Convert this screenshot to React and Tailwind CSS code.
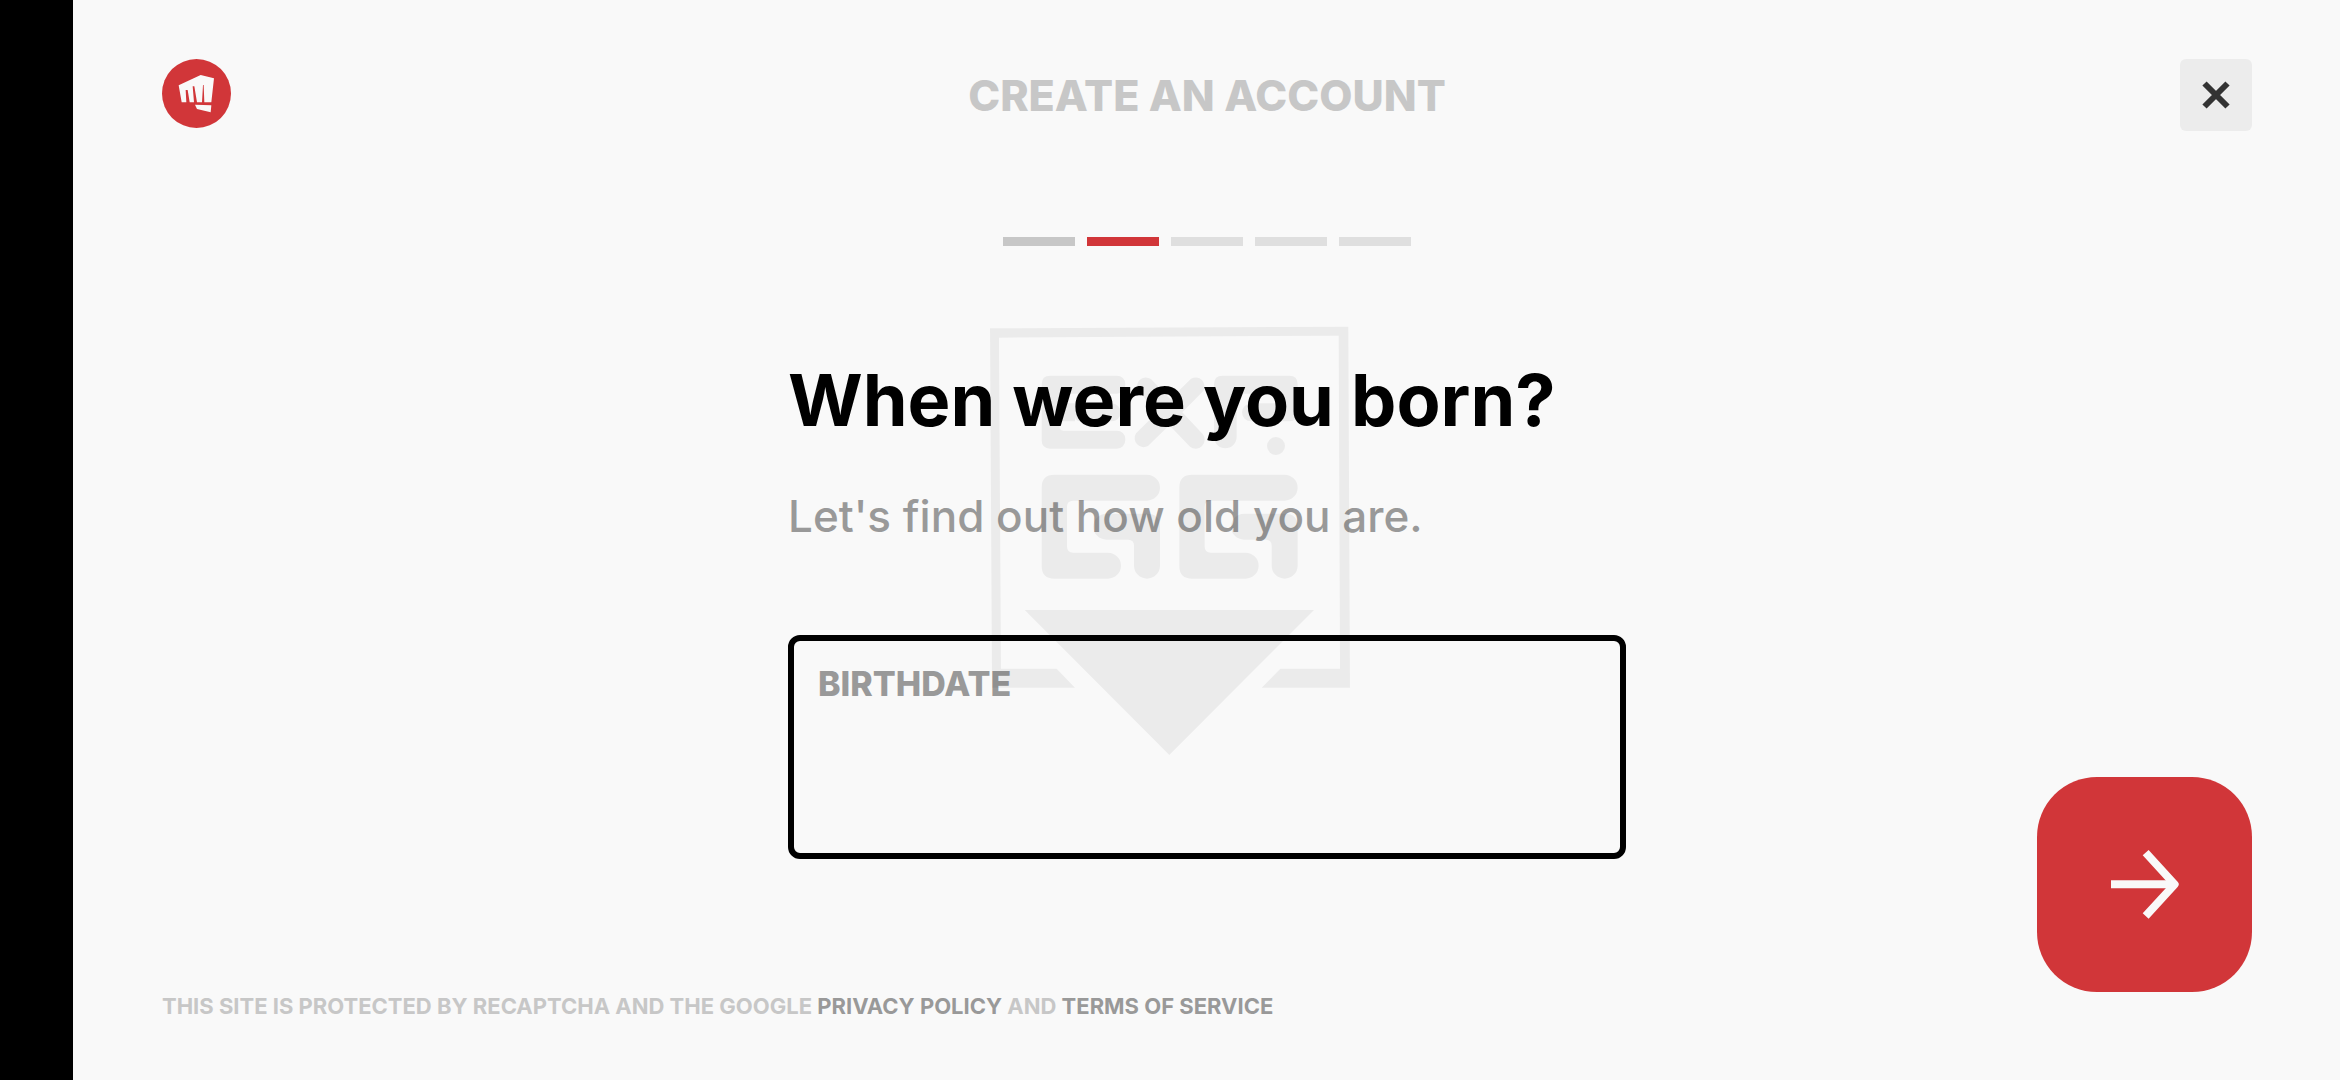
import { useState } from 'react'

const steps = ['email', 'birthdate', 'username', 'password', 'confirm']

const stepClasses = {
  done: 'bg-[#c7c7c7]',
  current: 'bg-[#d13639]',
  upcoming: 'bg-[#dfdfdf]',
}

const getStepStatus = (index, current) => {
  if (index < current) return 'done'
  return index === current ? 'current' : 'upcoming'
}

const FistLogo = () => (
  <svg viewBox="66 56 207 207" className="block size-[69px]" aria-hidden="true">
    <circle cx="169.5" cy="159.5" r="103.5" fill="#d13639" />
    <path
      fill="#f9f9f9"
      d="M116 135 182 104 222 114 214 186H193L191 134H189L186 186H171L163 138H158L162 186H149L143 149H137L139 186H125Z"
    />
    <path fill="#f9f9f9" d="M165 193 214 195 212 216 171 206Z" />
  </svg>
)

const CloseIcon = () => (
  <svg viewBox="0 0 28 28" className="size-7" fill="none" stroke="#333" strokeWidth="6" aria-hidden="true">
    <path d="M2.5 2.5 25.5 25.5M25.5 2.5 2.5 25.5" />
  </svg>
)

const ArrowIcon = () => (
  <svg viewBox="273 265 204 212" className="w-[68px]" fill="none" stroke="#f9f9f9" strokeWidth="24" aria-hidden="true">
    <path d="M273 371H462" />
    <path d="M377 276 464 371 377 466" strokeLinejoin="round" />
  </svg>
)

const Watermark = () => (
  <div className="pointer-events-none absolute inset-0 flex items-center justify-center">
    <svg viewBox="60 43 1080 1290" className="w-[360px]" fill="#000" fillOpacity="0.055" aria-hidden="true">
      <path d="M60 53 1135 48 1140 1131H875L931 1074H1110L1106 75 87 81 93 1074H260L315 1131H66Z" />
      <path d="M164 898H1032L598 1333Z" />
      <path d="M240 195H441A25 25 0 0 1 466 220V224A25 25 0 0 1 441 249H278Q269 249 269 258V278H425A25 25 0 0 1 425 332H330Q318 332 315 320V332H269V350Q269 360 280 360H441A25 25 0 0 1 466 385V389A25 25 0 0 1 441 414H240Q215 414 215 389V220Q215 195 240 195Z" />
      <path d="M543 205 601 265 663 204A27 27 0 0 1 700 241L637 305 698 370A27 27 0 0 1 660 408L598 344 534 406A27 27 0 0 1 498 368L562 305 505 242A27 27 0 0 1 543 205Z" />
      <path d="M757 195H958Q983 195 983 220V307Q983 332 958 332H843A27 27 0 0 1 843 278H920Q928 278 928 270V258Q928 249 919 249H808Q800 249 800 257V379A34 34 0 0 1 732 379V220Q732 195 757 195Z" />
      <circle cx="918" cy="406" r="27" />
      <path
        id="watermark-g"
        d="M253 492H531A39 39 0 0 1 531 570H310Q291 570 291 589V707Q291 726 310 726H414A39 39 0 0 1 414 804H253Q215 804 215 766V530Q215 492 253 492ZM409 609H531Q570 609 570 648V765A39 39 0 0 1 492 765V705Q492 687 474 687H409A39 39 0 0 1 409 609Z"
      />
      <use href="#watermark-g" x="413" />
    </svg>
  </div>
)

const StepIndicator = ({ current }) => (
  <ol className="mx-auto flex gap-3" aria-label={`Step ${current + 1} of ${steps.length}`}>
    {steps.map((step, index) => (
      <li key={step} className={`h-[9px] w-[72px] ${stepClasses[getStepStatus(index, current)]}`} />
    ))}
  </ol>
)

const App = () => {
  const [birthdate, setBirthdate] = useState('')

  return (
    <div className="relative flex min-h-screen bg-[#f9f9f9] font-['Inter',sans-serif]">
      <div className="w-[73px] shrink-0 bg-black" />

      <div className="flex flex-1 flex-col pt-[59px] pr-[88px] pb-15 pl-[89px]">
        <header className="grid grid-cols-[1fr_auto_1fr] items-start">
          <a href="#home" aria-label="Home" className="justify-self-start">
            <FistLogo />
          </a>
          <h2 className="text-[43px] leading-[72px] font-extrabold text-[#c7c7c7] uppercase">Create an account</h2>
          <button
            type="button"
            aria-label="Close"
            className="flex size-[72px] items-center justify-center justify-self-end rounded-md bg-[#ececec]"
          >
            <CloseIcon />
          </button>
        </header>

        <div className="mt-[106px] flex">
          <StepIndicator current={1} />
        </div>

        <main className="grid flex-1 grid-cols-[1fr_838px_1fr]">
          <form id="birthdate-form" className="col-start-2 pt-[108px]" onSubmit={(event) => event.preventDefault()}>
            <h1 className="text-[72px] leading-[92px] font-bold text-black">When were you born?</h1>
            <p className="mt-11 text-[44px] leading-[52px] font-medium text-[#999]">Let's find out how old you are.</p>

            <div className="mt-[93px] flex h-56 flex-col rounded-xl border-6 border-black px-6 pt-5 pb-4">
              <label htmlFor="birthdate" className="text-[34px] leading-[46px] font-extrabold text-[#999] uppercase">
                Birthdate
              </label>
              <input
                id="birthdate"
                type="text"
                value={birthdate}
                onChange={(event) => setBirthdate(event.target.value)}
                className="w-full flex-1 bg-transparent text-[44px] text-black outline-none"
              />
            </div>
          </form>

          <button
            type="submit"
            form="birthdate-form"
            aria-label="Next"
            className="flex size-[215px] items-center justify-center self-end justify-self-end rounded-[60px] bg-[#d13639]"
          >
            <ArrowIcon />
          </button>
        </main>

        <footer className="text-[22px] leading-7 font-bold text-[#c7c7c7] uppercase">
          This site is protected by reCAPTCHA and the Google{' '}
          <a href="#privacy" className="text-[#999]">Privacy Policy</a> and{' '}
          <a href="#terms" className="text-[#999]">Terms of Service</a>
        </footer>
      </div>

      <Watermark />
    </div>
  )
}

export default App
